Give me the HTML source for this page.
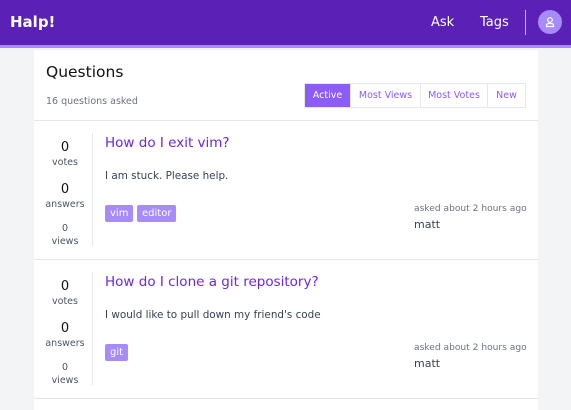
<!DOCTYPE html>
<html><head><style>
*{margin:0;padding:0;box-sizing:border-box}
body{width:571px;height:406px;overflow:hidden;background:#f3f4f6;font-family:"DejaVu Sans","Liberation Sans",sans-serif;position:relative}
.hdr{position:absolute;left:0;top:0;width:571px;background:#5b21b6;border-bottom:3px solid #a78bfa;height:48px}
.abs{position:absolute;white-space:nowrap}
.card{position:absolute;left:34px;top:50px;width:504px;height:360px;background:#fff}
.btns{position:absolute;left:304px;top:83px;width:222px;height:25px;display:flex;border:1px solid #e5e7eb}
.btns div{font-size:9.5px;color:#8b5cf6;line-height:23px;border-left:1px solid #e5e7eb;text-align:center}
.btns div:first-child{border-left:none;background:#8b5cf6;color:#fff}
.hr{position:absolute;left:34px;width:504px;height:1px;background:#e5e7eb}
.num{font-size:13px;color:#111;text-align:center;width:60px}
.lbl{font-size:9.5px;color:#4b5563;text-align:center;width:60px}
.tag{position:absolute;height:17px;background:#a78bfa;color:#fff;font-size:10px;line-height:17px;padding:0 5px;border-radius:2px}
.ttl{font-size:13.5px;color:#6d28d9}
.bd{font-size:10.4px;color:#374151}
.ask{font-size:9.1px;color:#6b7280}
.usr{font-size:11px;color:#374151}
</style></head><body>
<div class="hdr"></div>
<div class="abs" style="left:10px;top:13px;color:#fff;font-weight:bold;font-size:15px">Halp!</div>
<div class="abs" style="left:431px;top:15px;color:#fff;font-size:13px">Ask</div>
<div class="abs" style="left:480px;top:15px;color:#fff;font-size:13px">Tags</div>
<div class="abs" style="left:525px;top:10px;width:1px;height:25px;background:#c4b5fd"></div>
<div class="abs" style="left:538px;top:10px;width:24px;height:24px;border-radius:50%;background:#a78bfa">
<svg width="24" height="24" viewBox="0 0 24 24"><circle cx="12" cy="10" r="2.3" fill="none" stroke="#fff" stroke-width="1.2"/><path d="M8.5 16.5v-1a2 2 0 0 1 2-2h3a2 2 0 0 1 2 2v1z" fill="none" stroke="#fff" stroke-width="1.2"/></svg></div>
<div class="card"></div>
<div class="abs" style="left:46px;top:63px;font-size:15.5px;color:#111">Questions</div>
<div class="abs" style="left:46px;top:96px;font-size:9.5px;color:#6b7280">16 questions asked</div>
<div class="btns"><div style="width:45px">Active</div><div style="width:70px">Most Views</div><div style="width:67px">Most Votes</div><div style="flex:1">New</div></div>
<div class="hr" style="top:120px"></div>
<div class="hr" style="top:259px"></div>
<div class="hr" style="top:398px"></div>

<div class="abs num" style="left:35px;top:140px">0</div>
<div class="abs lbl" style="left:35px;top:157px">votes</div>
<div class="abs num" style="left:35px;top:182px">0</div>
<div class="abs lbl" style="left:35px;top:199px">answers</div>
<div class="abs lbl" style="left:35px;top:223px">0</div>
<div class="abs lbl" style="left:35px;top:236px">views</div>
<div class="abs" style="left:92px;top:133px;width:1px;height:113px;background:#e5e7eb"></div>
<div class="abs ttl" style="left:105px;top:135px">How do I exit vim?</div>
<div class="abs bd" style="left:105px;top:170px">I am stuck. Please help.</div>
<div class="tag" style="left:105px;top:205px">vim</div>
<div class="tag" style="left:137px;top:205px">editor</div>
<div class="abs ask" style="left:414px;top:204px">asked about 2 hours ago</div>
<div class="abs usr" style="left:414px;top:218px">matt</div>

<div class="abs num" style="left:35px;top:279px">0</div>
<div class="abs lbl" style="left:35px;top:296px">votes</div>
<div class="abs num" style="left:35px;top:321px">0</div>
<div class="abs lbl" style="left:35px;top:338px">answers</div>
<div class="abs lbl" style="left:35px;top:362px">0</div>
<div class="abs lbl" style="left:35px;top:375px">views</div>
<div class="abs" style="left:92px;top:272px;width:1px;height:113px;background:#e5e7eb"></div>
<div class="abs ttl" style="left:105px;top:274px">How do I clone a git repository?</div>
<div class="abs bd" style="left:105px;top:309px">I would like to pull down my friend's code</div>
<div class="tag" style="left:105px;top:344px">git</div>
<div class="abs ask" style="left:414px;top:343px">asked about 2 hours ago</div>
<div class="abs usr" style="left:414px;top:357px">matt</div>
</body></html>
